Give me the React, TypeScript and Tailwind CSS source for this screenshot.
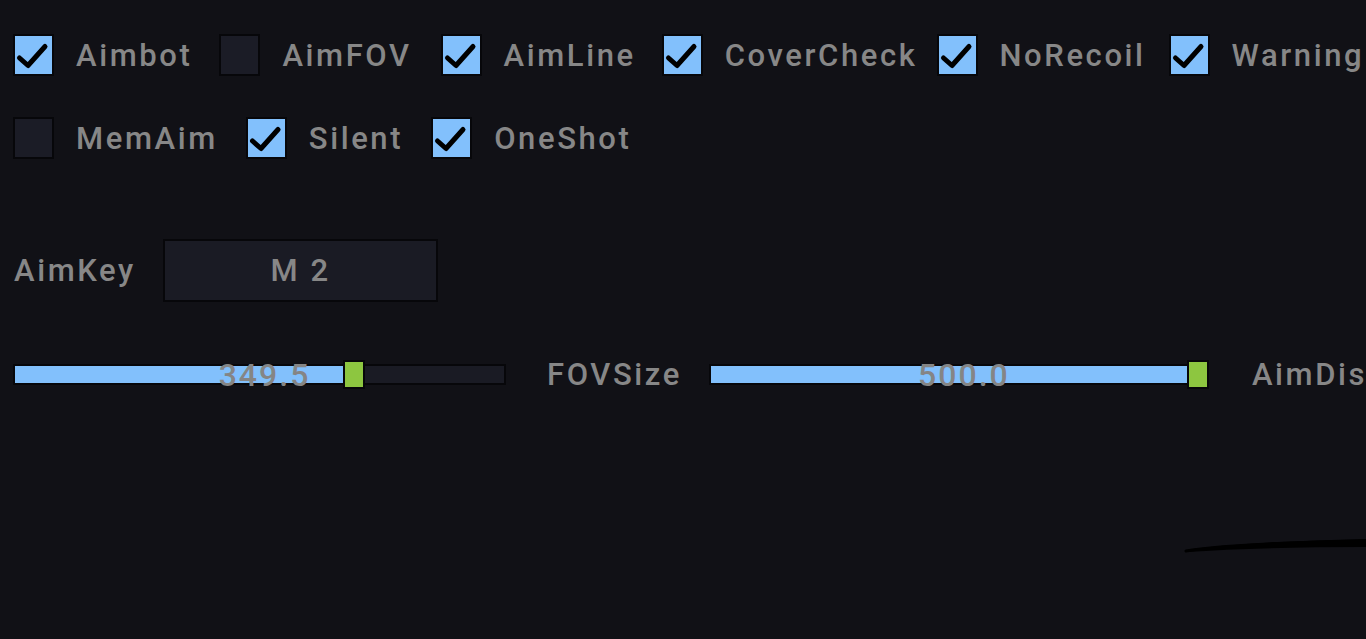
import React from "react";

const font = { fontFamily: "Roboto, 'Noto Sans', sans-serif" };

const txt = "text-[31px] leading-none tracking-[2.6px] font-medium text-[#878787]";

function Check({ checked, label, ml }: { checked: boolean; label: string; ml: string }) {
  return (
    <div className={"flex items-center gap-[22px] shrink-0 " + ml}>
      <div
        className={
          "relative w-[41px] h-[42px] border-2 border-[#07070a] " +
          (checked ? "bg-[#82c0fc]" : "bg-[#1b1c26]")
        }
      >
        {checked && (
          <svg viewBox="0 0 41 42" className="absolute -left-[2px] -top-[2px] w-[41px] h-[42px]">
            <path d="M6.5 24 L15 31.5 L32 12.5" fill="none" stroke="#000" strokeWidth="5" strokeLinecap="round" strokeLinejoin="round" />
          </svg>
        )}
      </div>
      <span className={txt}>{label}</span>
    </div>
  );
}

function Slider({ value, frac, width }: { value: string; frac: number; width: number }) {
  const grabW = 22;
  const grabLeft = frac * (width - grabW);
  return (
    <div className="relative h-[29px] shrink-0" style={{ width }}>
      <div className="absolute left-0 right-0 top-[4px] h-[21px] bg-[#1a1b24] border-2 border-[#07070a] overflow-hidden">
        <div className="h-full bg-[#82c0fc]" style={{ width: grabLeft + 2 }} />
      </div>
      <div
        className="absolute top-0 h-[29px] bg-[#8dc640] border-2 border-[#07070a]"
        style={{ left: grabLeft, width: grabW }}
      />
      <div className="absolute inset-0 flex items-center justify-center pl-[10px] text-[32px] leading-none tracking-[2px] font-medium text-[#858585]">
        {value}
      </div>
    </div>
  );
}

export default function App() {
  return (
    <div className="relative w-[1366px] h-[639px] bg-[#111116] overflow-hidden whitespace-nowrap" style={font}>
      <div className="flex flex-col pl-[13px] pt-[34px]">
        <div className="flex items-center">
          <Check checked label="Aimbot" ml="" />
          <Check checked={false} label="AimFOV" ml="ml-[27px]" />
          <Check checked label="AimLine" ml="ml-[29px]" />
          <Check checked label="CoverCheck" ml="ml-[26px]" />
          <Check checked label="NoRecoil" ml="ml-[19px]" />
          <Check checked label="Warning" ml="ml-[23px]" />
        </div>
        <div className="flex items-center mt-[41px]">
          <Check checked={false} label="MemAim" ml="" />
          <Check checked label="Silent" ml="ml-[28px]" />
          <Check checked label="OneShot" ml="ml-[28px]" />
        </div>
        <div className="flex items-center mt-[80px]">
          <span className={"w-[150px] pl-[1px] " + txt}>AimKey</span>
          <div className={"w-[275px] h-[63px] bg-[#1a1b24] border-2 border-[#07070a] flex items-center justify-center " + txt}>
            M 2
          </div>
        </div>
        <div className="flex items-center mt-[57px]">
          <Slider value="349.5" frac={329 / 470} width={493} />
          <span className={"ml-[41px] " + txt}>FOVSize</span>
          <div className="ml-[27px]">
            <Slider value="500.0" frac={1} width={500} />
          </div>
          <span className={"ml-[43px] " + txt}>AimDis</span>
        </div>
      </div>
      <svg className="absolute left-[1180px] top-[525px] w-[186px] h-[40px]" viewBox="0 0 186 40">
        <path d="M6 25 Q60 17 186 14 L186 22 Q80 22 6 27 Z" fill="#000" />
        <path d="M6 26 Q60 18 186 16" fill="none" stroke="#000" strokeWidth="3" strokeLinecap="round" />
      </svg>
    </div>
  );
}
